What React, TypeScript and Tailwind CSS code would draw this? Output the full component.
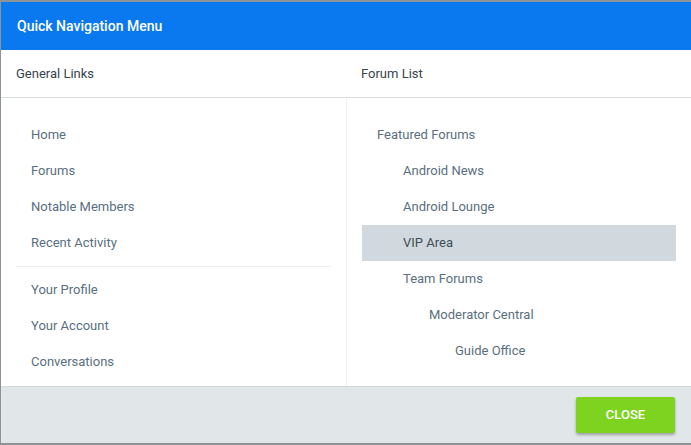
const general = [
  ['Home', 'Forums', 'Notable Members', 'Recent Activity'],
  ['Your Profile', 'Your Account', 'Conversations'],
];

const forums = [
  { label: 'Featured Forums', depth: 0 },
  { label: 'Android News', depth: 1 },
  { label: 'Android Lounge', depth: 1 },
  { label: 'VIP Area', depth: 1, active: true },
  { label: 'Team Forums', depth: 1 },
  { label: 'Moderator Central', depth: 2 },
  { label: 'Guide Office', depth: 3 },
];

const indent = ['pl-[15px]', 'pl-[41px]', 'pl-[67px]', 'pl-[93px]'];

export default function App() {
  return (
    <div className="w-[691px] h-[445px] overflow-hidden bg-[#8e9396] pt-[2px] pl-[1px] font-['Roboto',sans-serif]">
      <div className="w-[690px] h-[441px] bg-white flex flex-col">
        <div className="h-[48px] shrink-0 bg-[#0a78ee] flex items-center px-4 text-white text-[14px] font-medium">
          Quick Navigation Menu
        </div>

        <div className="h-[48px] shrink-0 flex border-b border-[#d8dde0] text-[13px] text-[#37434e]">
          <div className="w-[345px] flex items-center px-[15px]">General Links</div>
          <div className="flex-1 flex items-center px-[15px]">Forum List</div>
        </div>

        <div className="flex h-[288px] shrink-0">
          <div className="w-[346px] border-r border-[#eef1f3] px-[15px] pt-[19px]">
            {general.map((group, gi) => (
              <div key={gi}>
                {gi > 0 && <div className="h-px bg-[#eceff1] my-[5px]" />}
                {group.map((item) => (
                  <div key={item} className="h-[36px] flex items-center pl-[15px] text-[13px] text-[#5a6f80]">
                    {item}
                  </div>
                ))}
              </div>
            ))}
          </div>
          <div className="flex-1 px-[15px] pt-[19px]">
            {forums.map((f) => (
              <div
                key={f.label}
                className={`h-[36px] flex items-center text-[13px] ${indent[f.depth]} ${
                  f.active ? 'bg-[#d1d9de] text-[#3e4d59]' : 'text-[#5a6f80]'
                }`}
              >
                {f.label}
              </div>
            ))}
          </div>
        </div>

        <div className="flex-1 bg-[#e1e6e9] border-t border-[#d3dadf] flex items-center justify-end pr-[16px]">
          <button className="w-[99px] h-[36px] bg-[#7ed321] text-white text-[13px] font-medium uppercase rounded-[2px] shadow-[0_2px_3px_rgba(0,0,0,0.3)]">
            Close
          </button>
        </div>
      </div>
    </div>
  );
}
